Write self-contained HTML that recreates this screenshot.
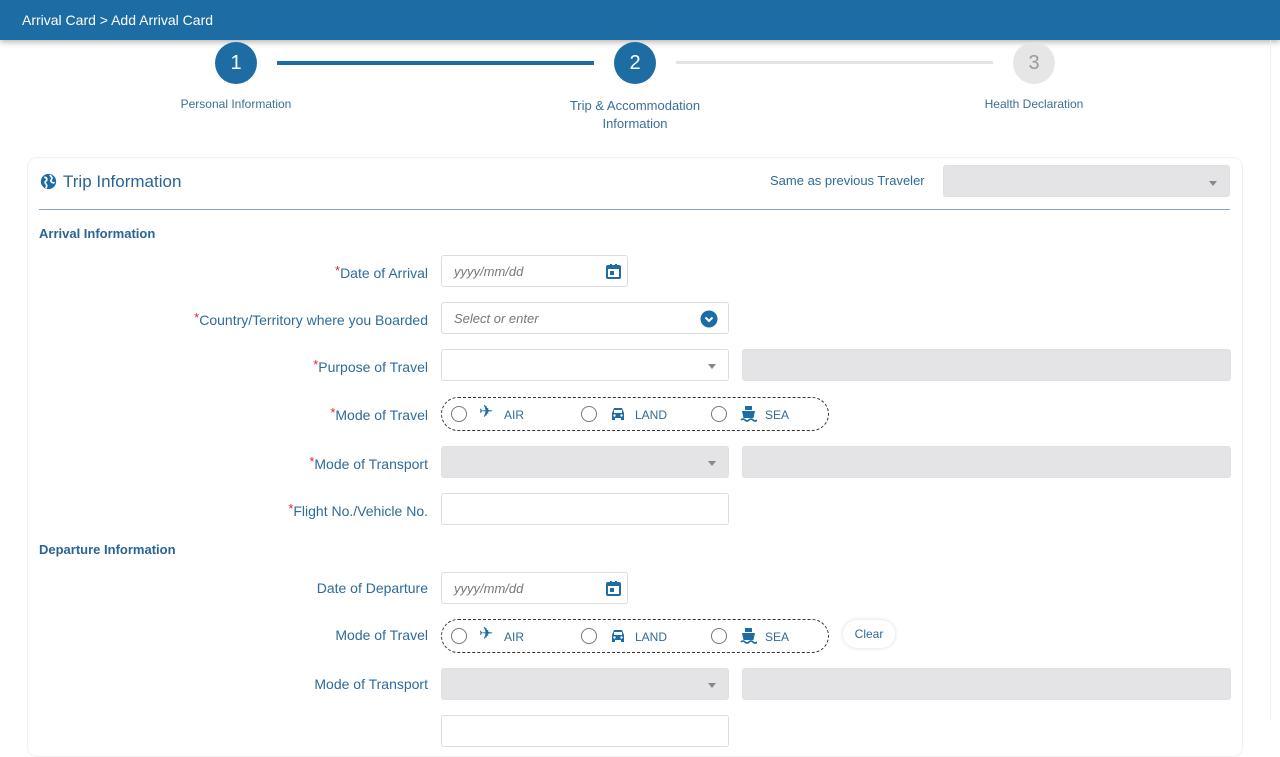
<!DOCTYPE html>
<html><head><style>
*{box-sizing:border-box;margin:0;padding:0}
body{width:1280px;height:720px;overflow:hidden;background:#fff;font-family:"Liberation Sans",sans-serif;color:#2b6a9b;position:relative}
.hdr{position:absolute;left:0;top:0;width:1280px;height:40px;background:#1d6ca3;color:#fff;font-size:14px;line-height:40px;padding-left:22px;box-shadow:0 2px 6px rgba(0,0,0,.3)}
.abs{position:absolute}
.circ{position:absolute;width:42px;height:42px;border-radius:50%;font-size:20px;line-height:42px;text-align:center;color:#fff;background:#1d6ca3}
.step{position:absolute;font-size:12px;text-align:center;color:#3b6f98}
.lbl{position:absolute;right:852px;font-size:14px;color:#2e6b9a;white-space:nowrap}
.lbl b{color:#e02424;font-weight:normal;font-size:13px;vertical-align:3px}
.in{position:absolute;left:441px;height:32px;border:1px solid #ddd;border-radius:3px;background:#fff;font-size:13px;font-style:italic;color:#777;padding-left:12px;line-height:32px}
.gr{background:#e4e4e6;border-color:#e0e0e0}
.car{position:absolute;right:12px;top:14px;width:0;height:0;border-left:4px solid transparent;border-right:4px solid transparent;border-top:5px solid #888}
.sec{position:absolute;left:39px;font-size:13px;font-weight:bold;color:#2a6496}
.radio{position:absolute;left:441px;width:388px;height:34px;border:1px dashed #333;border-radius:17px;font-size:12px;color:#2e6b9a}
.rb{position:absolute;top:8px;width:16px;height:16px;border:1.5px solid #777;border-radius:50%}
.rt{position:absolute;top:10px}
.ic{position:absolute;top:7px}
</style></head><body>
<div class="hdr">Arrival Card &gt; Add Arrival Card</div>
<div class="abs" style="left:1270px;top:40px;width:1px;height:680px;background:#eee"></div>
<div class="circ" style="left:215px;top:42px">1</div>
<div class="abs" style="left:277px;top:61px;width:317px;height:4px;background:#1d6ca3"></div>
<div class="circ" style="left:614px;top:42px">2</div>
<div class="abs" style="left:676px;top:61px;width:317px;height:3px;background:#e4e4e4"></div>
<div class="circ" style="left:1013px;top:42px;background:#e6e6e6;color:#999">3</div>
<div class="step" style="left:136px;top:97px;width:200px">Personal Information</div>
<div class="step" style="left:535px;top:97px;width:200px;font-size:13px;line-height:18px">Trip &amp; Accommodation<br>Information</div>
<div class="step" style="left:934px;top:97px;width:200px">Health Declaration</div>
<div class="abs" style="left:27px;top:157px;width:1216px;height:600px;border:1px solid #f0f0f0;border-radius:10px"></div>
<svg class="abs" style="left:40px;top:173px" width="17" height="17" viewBox="0 0 20 20"><circle cx="10" cy="10" r="9" fill="#1d6ca3"/><path d="M5 5c2 0 3 1 3 3s-2 1-2 3 2 2 2 4l-1 3M12 2c0 2 2 2 2 4s-2 2-1 4 3 1 4 2" stroke="#fff" stroke-width="2" fill="none"/></svg>
<div class="abs" style="left:63px;top:172px;font-size:17px;color:#2a6496">Trip Information</div>
<div class="abs" style="left:770px;top:173px;font-size:13px;color:#2e6b9a">Same as previous Traveler</div>
<div class="in gr" style="left:943px;top:165px;width:287px"><div class="car" style="top:15px"></div></div>
<div class="abs" style="left:39px;top:209px;width:1191px;height:1px;background:#8aa3b5"></div>
<div class="sec" style="top:226px">Arrival Information</div>
<div class="lbl" style="top:263px"><b>*</b>Date of Arrival</div>
<div class="in" style="top:255px;width:187px">yyyy/mm/dd<svg class="abs" style="left:164px;top:8px" width="15" height="15" viewBox="0 0 15 15"><rect x="1" y="2" width="13" height="12" rx="1" fill="none" stroke="#1d6ca3" stroke-width="2"/><rect x="1" y="2" width="13" height="3" fill="#1d6ca3"/><rect x="4" y="0" width="2" height="3" fill="#1d6ca3"/><rect x="9" y="0" width="2" height="3" fill="#1d6ca3"/><rect x="4" y="7" width="4" height="4" fill="#1d6ca3"/></svg></div>
<div class="lbl" style="top:310px"><b>*</b>Country/Territory where you Boarded</div>
<div class="in" style="top:302px;width:288px">Select or enter<svg class="abs" style="left:258px;top:7px" width="18" height="18" viewBox="0 0 18 18"><circle cx="9" cy="9" r="8.5" fill="#1d6ca3"/><path d="M5.5 7.5l3.5 3.5 3.5-3.5" stroke="#fff" stroke-width="2" fill="none"/></svg></div>
<div class="lbl" style="top:357px"><b>*</b>Purpose of Travel</div>
<div class="in" style="top:349px;width:288px"><div class="car"></div></div>
<div class="in gr" style="left:742px;top:349px;width:489px"></div>
<div class="lbl" style="top:405px"><b>*</b>Mode of Travel</div>
<div class="radio" style="top:397px">
<div class="rb" style="left:9px"></div><span class="ic" style="left:37px;font-size:17px;top:4px;color:#1d6ca3">✈</span><span class="rt" style="left:62px">AIR</span>
<div class="rb" style="left:139px"></div><svg class="ic" style="left:168px;top:9px" width="16" height="14" viewBox="0 0 16 14"><path d="M2 6l2-5h8l2 5v7h-3v-2H5v2H2z" fill="#1d6ca3"/><rect x="4" y="3" width="8" height="3" fill="#fff"/><circle cx="4.5" cy="8.5" r="1.2" fill="#fff"/><circle cx="11.5" cy="8.5" r="1.2" fill="#fff"/></svg><span class="rt" style="left:193px">LAND</span>
<div class="rb" style="left:269px"></div><svg class="ic" style="left:298px;top:7px" width="17" height="18" viewBox="0 0 17 18"><rect x="5" y="1" width="7" height="4" fill="#1d6ca3"/><path d="M2 6h13l-1.5 7h-10z" fill="#1d6ca3"/><path d="M1 15q2-2 4 0t4 0 4 0 4 0" stroke="#1d6ca3" stroke-width="1.6" fill="none"/></svg><span class="rt" style="left:323px">SEA</span>
</div>
<div class="lbl" style="top:454px"><b>*</b>Mode of Transport</div>
<div class="in gr" style="top:446px;width:288px"><div class="car"></div></div>
<div class="in gr" style="left:742px;top:446px;width:489px"></div>
<div class="lbl" style="top:501px"><b>*</b>Flight No./Vehicle No.</div>
<div class="in" style="top:493px;width:288px"></div>
<div class="sec" style="top:542px">Departure Information</div>
<div class="lbl" style="top:580px">Date of Departure</div>
<div class="in" style="top:572px;width:187px">yyyy/mm/dd<svg class="abs" style="left:164px;top:8px" width="15" height="15" viewBox="0 0 15 15"><rect x="1" y="2" width="13" height="12" rx="1" fill="none" stroke="#1d6ca3" stroke-width="2"/><rect x="1" y="2" width="13" height="3" fill="#1d6ca3"/><rect x="4" y="0" width="2" height="3" fill="#1d6ca3"/><rect x="9" y="0" width="2" height="3" fill="#1d6ca3"/><rect x="4" y="7" width="4" height="4" fill="#1d6ca3"/></svg></div>
<div class="lbl" style="top:627px">Mode of Travel</div>
<div class="radio" style="top:619px">
<div class="rb" style="left:9px"></div><span class="ic" style="left:37px;font-size:17px;top:4px;color:#1d6ca3">✈</span><span class="rt" style="left:62px">AIR</span>
<div class="rb" style="left:139px"></div><svg class="ic" style="left:168px;top:9px" width="16" height="14" viewBox="0 0 16 14"><path d="M2 6l2-5h8l2 5v7h-3v-2H5v2H2z" fill="#1d6ca3"/><rect x="4" y="3" width="8" height="3" fill="#fff"/><circle cx="4.5" cy="8.5" r="1.2" fill="#fff"/><circle cx="11.5" cy="8.5" r="1.2" fill="#fff"/></svg><span class="rt" style="left:193px">LAND</span>
<div class="rb" style="left:269px"></div><svg class="ic" style="left:298px;top:7px" width="17" height="18" viewBox="0 0 17 18"><rect x="5" y="1" width="7" height="4" fill="#1d6ca3"/><path d="M2 6h13l-1.5 7h-10z" fill="#1d6ca3"/><path d="M1 15q2-2 4 0t4 0 4 0 4 0" stroke="#1d6ca3" stroke-width="1.6" fill="none"/></svg><span class="rt" style="left:323px">SEA</span>
</div>
<div class="abs" style="left:843px;top:620px;width:52px;height:28px;border-radius:14px;box-shadow:0 0 4px rgba(0,0,0,.15);font-size:12px;line-height:28px;text-align:center;color:#2e6b9a">Clear</div>
<div class="lbl" style="top:676px">Mode of Transport</div>
<div class="in gr" style="top:668px;width:288px"><div class="car"></div></div>
<div class="in gr" style="left:742px;top:668px;width:489px"></div>
<div class="in" style="top:715px;width:288px"></div>
</body></html>
